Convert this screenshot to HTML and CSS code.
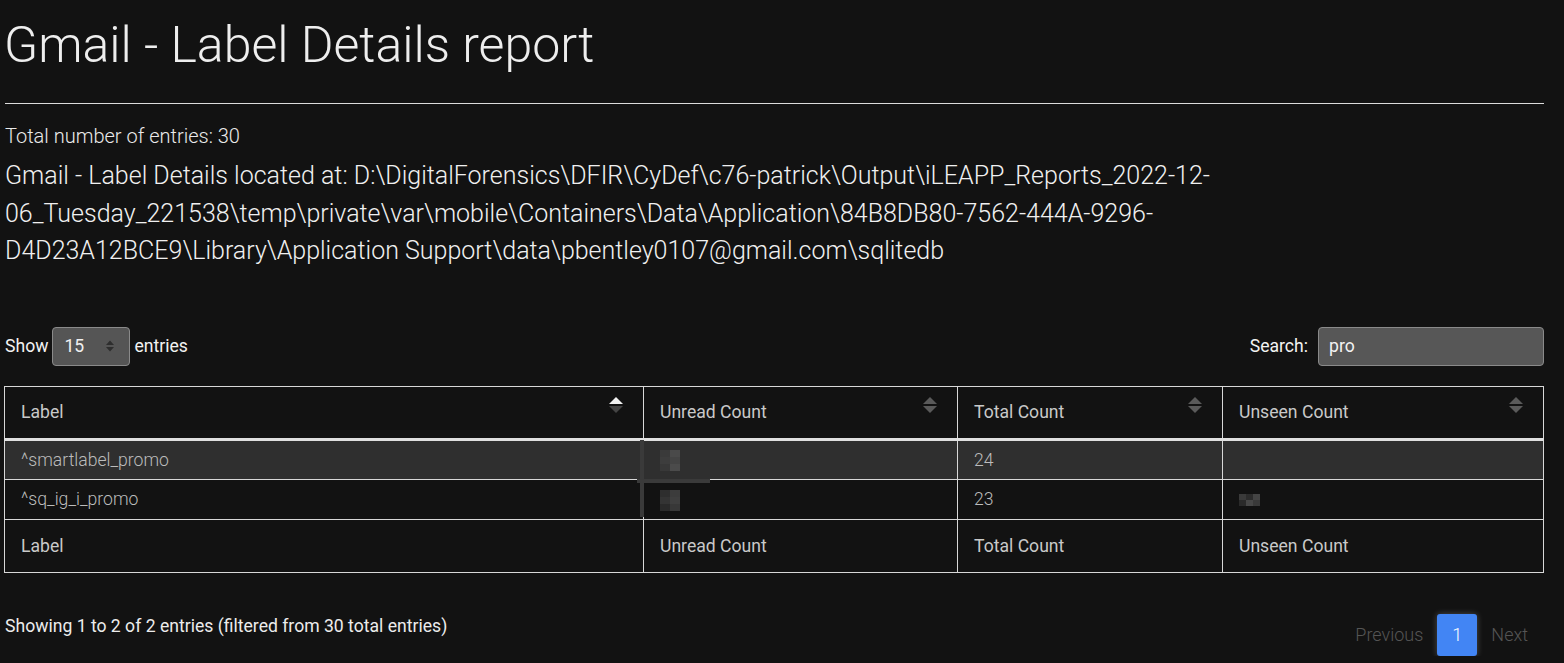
FILE: index.html
```html
<!DOCTYPE html>
<html>
<head>
<meta charset="utf-8">
<title>Gmail - Label Details report</title>
<link rel="stylesheet" href="styles.css">
</head>
<body>
<main class="page">
  <h1 class="title">Gmail - Label Details report</h1>
  <hr class="rule">
  <p class="total">Total number of entries: 30</p>
  <p class="path">Gmail - Label Details located at: D:\DigitalForensics\DFIR\CyDef\c76-patrick\Output\iLEAPP_Reports_2022-12-06_Tuesday_221538\temp\private\var\mobile\Containers\Data\Application\84B8DB80-7562-444A-9296-D4D23A12BCE9\Library\Application Support\data\pbentley0107@gmail.com\sqlitedb</p>

  <div class="controls">
    <label class="length">Show
      <span class="select">15
        <svg class="select-arrows" width="10" height="14" viewBox="0 0 10 14"><path d="M1 6 L5 1.5 L9 6 Z M1 8 L5 12.5 L9 8 Z" fill="#2e2e2e"/></svg>
      </span>
      entries</label>
    <label class="search">Search: <span class="search-box">pro</span></label>
  </div>

  <div class="table-wrap">
    <table class="grid">
      <colgroup>
        <col class="c1"><col class="c2"><col class="c3"><col class="c4">
      </colgroup>
      <thead>
        <tr>
          <th>Label<span class="sort sort-asc"></span></th>
          <th>Unread Count<span class="sort"></span></th>
          <th>Total Count<span class="sort"></span></th>
          <th>Unseen Count<span class="sort"></span></th>
        </tr>
      </thead>
      <tbody>
        <tr class="odd">
          <td>^smartlabel_promo</td>
          <td><span class="pix tall"><i style="background:#3a3a3a"></i><i style="background:#4a4a4a"></i><i style="background:#3d3d3d"></i><i style="background:#444"></i><i style="background:#383838"></i><i style="background:#4b4b4b"></i></span></td>
          <td>24</td>
          <td></td>
        </tr>
        <tr class="even">
          <td>^sq_ig_i_promo</td>
          <td><span class="pix tall"><i style="background:#2e2e2e"></i><i style="background:#3c3c3c"></i><i style="background:#343434"></i><i style="background:#3f3f3f"></i><i style="background:#2a2a2a"></i><i style="background:#383838"></i></span></td>
          <td>23</td>
          <td><span class="pix wide"><i style="background:#3a3a3a"></i><i style="background:#2c2c2c"></i><i style="background:#444"></i><i style="background:#2a2a2a"></i><i style="background:#474747"></i><i style="background:#3a3a3a"></i></span></td>
        </tr>
      </tbody>
      <tfoot>
        <tr>
          <th>Label</th>
          <th>Unread Count</th>
          <th>Total Count</th>
          <th>Unseen Count</th>
        </tr>
      </tfoot>
    </table>
    <span class="resize-v"></span>
    <span class="resize-h"></span>
  </div>

  <div class="bottom">
    <div class="info">Showing 1 to 2 of 2 entries (filtered from 30 total entries)</div>
    <nav class="pager">
      <span class="pg disabled">Previous</span>
      <span class="pg current">1</span>
      <span class="pg disabled next">Next</span>
    </nav>
  </div>
</main>
</body>
</html>
```

FILE: styles.css
```css
html, body {
  margin: 0;
  padding: 0;
  background: #121212;
  color: #e8e8e8;
  font-family: Roboto, "Liberation Sans", Arial, sans-serif;
}

.page {
  padding: 0 20px 0 4px;
}

.title {
  margin: 14px 0 0 0;
  font-size: 50px;
  line-height: 62px;
  font-weight: 300;
  color: #eeeeee;
}

.rule {
  margin: 27px 0 0 1px;
  border: 0;
  border-top: 1px solid #dcdcdc;
  height: 0;
}

.total {
  margin: 18px 0 0 1px;
  font-size: 20px;
  line-height: 28px;
  font-weight: 300;
  color: #eaeaea;
}

.path {
  margin: 7px 0 0 1px;
  padding-right: 8px;
  font-size: 25px;
  line-height: 37.5px;
  font-weight: 300;
  color: #f0f0f0;
}

.controls {
  margin-top: 57px;
  display: flex;
  justify-content: space-between;
  align-items: center;
  font-size: 17.6px;
  color: #f2f2f2;
}

.length, .search {
  display: flex;
  align-items: center;
  gap: 4px;
}

.length {
  margin-left: 1px;
}

.select {
  display: inline-flex;
  align-items: center;
  justify-content: space-between;
  box-sizing: border-box;
  width: 78px;
  height: 39px;
  padding: 0 14px 0 11px;
  background: #555555;
  border: 1px solid #8a8a8a;
  border-radius: 4px;
  color: #f0f0f0;
  font-size: 17.6px;
}

.search {
  gap: 10px;
}

.search-box {
  display: inline-flex;
  align-items: center;
  box-sizing: border-box;
  width: 226px;
  height: 39px;
  padding: 0 10px;
  background: #575757;
  border: 1px solid #8a8a8a;
  border-radius: 4px;
  color: #f2f2f2;
  font-size: 17.6px;
}

.table-wrap {
  position: relative;
  margin-top: 20px;
}

.grid {
  width: 100%;
  border-collapse: collapse;
  font-size: 17.6px;
}

.c1 { width: 639px; }
.c2 { width: 314px; }
.c3 { width: 265px; }
.c4 { width: auto; }

.grid th, .grid td {
  border: 1px solid #d8d8d8;
  text-align: left;
  color: #c9c9c9;
  line-height: 24px;
  padding: 0 16px;
}

.grid th {
  font-weight: 400;
  height: 52px;
  position: relative;
}

.grid thead th {
  height: 51px;
  border-bottom: 3px solid #e0e0e0;
}

.grid td {
  font-weight: 300;
  height: 38px;
  color: #bcbcbc;
}

.grid tr.even td {
  height: 39px;
}

.grid tr.odd td {
  background: #2f2f2f;
}

.sort {
  position: absolute;
  right: 20px;
  top: 10px;
  width: 14px;
  height: 16px;
}

.sort::before, .sort::after {
  content: "";
  position: absolute;
  left: 0;
  border-left: 7px solid transparent;
  border-right: 7px solid transparent;
}

.sort::before {
  top: 0;
  border-bottom: 7px solid #5a5a5a;
}

.sort::after {
  top: 9px;
  border-top: 7px solid #5a5a5a;
}

.sort-asc::before {
  border-bottom-color: #f2f2f2;
}

.sort-asc::after {
  border-top-color: #444444;
}

.pix {
  display: inline-grid;
  vertical-align: middle;
}

.pix i {
  display: block;
}

.pix.tall {
  grid-template-columns: repeat(2, 10px);
  grid-template-rows: repeat(3, 7px);
}

.pix.wide {
  grid-template-columns: repeat(3, 7px);
  grid-template-rows: repeat(2, 6px);
}

.resize-v {
  position: absolute;
  left: 636px;
  top: 54px;
  width: 4px;
  height: 77px;
  background: #3a3a3a;
}

.resize-h {
  position: absolute;
  left: 633px;
  top: 93px;
  width: 73px;
  height: 4px;
  background: #3a3a3a;
}

.bottom {
  margin-top: 41px;
  display: flex;
  justify-content: space-between;
  align-items: flex-start;
}

.info {
  margin-top: 0;
  margin-left: 1px;
  font-size: 17.6px;
  line-height: 24px;
  color: #ececec;
}

.pager {
  display: flex;
  align-items: center;
  font-size: 18px;
  font-weight: 300;
}

.pg {
  line-height: 42px;
  padding: 0 14px;
}

.pg.disabled {
  color: #555555;
}

.pg.next {
  padding-right: 16px;
}

.pg.current {
  width: 40px;
  padding: 0;
  text-align: center;
  background: #4285f4;
  color: #ffffff;
  border-radius: 3px;
  box-shadow: 0 0 6px rgba(255, 255, 255, 0.25);
}
```
